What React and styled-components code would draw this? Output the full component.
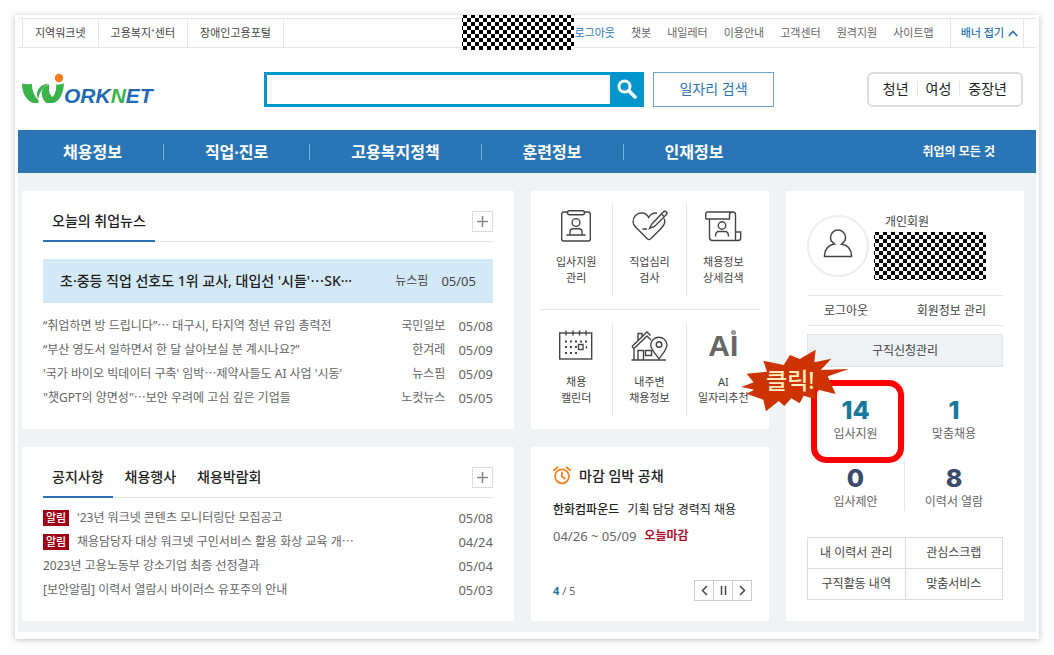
import React from 'react';
import styled, { createGlobalStyle, css } from 'styled-components';

const colors = {
  blue: '#2a75b5',
  cyan: '#0096cc',
  text: '#222',
  gray: '#666',
  line: '#e6e6e6',
  bg: '#eff3f6',
  red: '#f00',
};

const GlobalStyle = createGlobalStyle`
  *, *::before, *::after {
    box-sizing: border-box;
  }

  body {
    margin: 0;
    background: #fefefe;
    color: ${colors.text};
    font-family: 'Noto Sans', 'Noto Sans CJK KR', sans-serif;
    font-size: 12px;
    line-height: 16px;
  }

  a {
    color: inherit;
    text-decoration: none;
  }

  button, input {
    font: inherit;
    color: inherit;
  }

  ul, p, h2 {
    margin: 0;
    padding: 0;
    list-style: none;
  }
`;

const topLinks = ['지역워크넷', '고용복지⁺센터', '장애인고용포털'];
const userLinks = ['로그아웃', '챗봇', '내일레터', '이용안내', '고객센터', '원격지원', '사이트맵'];
const groups = ['청년', '여성', '중장년'];
const menu = ['채용정보', '직업·진로', '고용복지정책', '훈련정보', '인재정보'];

const news = [
  { title: '“취업하면 방 드립니다”⋯ 대구시, 타지역 청년 유입 총력전', source: '국민일보', date: '05/08' },
  { title: '“부산 영도서 일하면서 한 달 살아보실 분 계시나요?”', source: '한겨레', date: '05/09' },
  { title: "'국가 바이오 빅데이터 구축' 임박⋯제약사들도 AI 사업 '시동'", source: '뉴스핌', date: '05/09' },
  { title: '"챗GPT의 양면성"⋯보안 우려에 고심 깊은 기업들', source: '노컷뉴스', date: '05/05' },
];

const notices = [
  { title: "'23년 워크넷 콘텐츠 모니터링단 모집공고", date: '05/08', alert: true },
  { title: '채용담당자 대상 워크넷 구인서비스 활용 화상 교육 개⋯', date: '04/24', alert: true },
  { title: '2023년 고용노동부 강소기업 최종 선정결과', date: '05/04' },
  { title: '[보안알림] 이력서 열람시 바이러스 유포주의 안내', date: '05/03' },
];

const shortcuts = ['내 이력서 관리', '관심스크랩', '구직활동 내역', '맞춤서비스'];

/* icons */

const Logo = () => (
  <svg width='138' height='38' viewBox='0 -2 138 38' role='img' aria-label='WORKNET'>
    <path fill='#39b34a' d='M0 11.5Q5 12.500 10 12C10 18 12 24 16.500 28V31H11C4 28 0 21 0 11.500Z' />
    <path fill='#39b34a' d='M16 27C12.500 19 18 12 27 11.500C20.500 15 18 20 16 27Z' />
    <path fill='#39b34a' d='M20.500 17C22.500 14.500 24.500 13.200 27.500 12.500C26 18 27.500 22.500 30.500 25C33.500 22 34.500 17 34 12.500Q38 13 42 11.500C41.500 21 37.500 30 31 31H24.500C20.500 28 18.500 22 20.500 17Z' />
    <circle cx='37' cy='6' r='4.200' fill='#f57c1f' />
    <text x='42' y='31' fontFamily='Liberation Sans, sans-serif' fontSize='21' fontWeight='700' fontStyle='italic' fill='#2369b3'>
      ORK<tspan fill='#39b34a'>N</tspan>ET
    </text>
  </svg>
);

const Mosaic = () => (
  <svg width='112' height='100%' shapeRendering='crispEdges' aria-hidden='true'>
    <defs>
      <pattern id='mosaic' x='1' y='-1' width='8' height='8' patternUnits='userSpaceOnUse'>
        <rect width='8' height='8' fill='#fff' />
        <rect width='4' height='4' />
        <rect x='4' y='4' width='4' height='4' />
      </pattern>
    </defs>
    <rect width='112' height='100%' fill='url(#mosaic)' />
  </svg>
);

const SearchIcon = () => (
  <svg width='20' height='20' viewBox='0 0 20 20' fill='none' stroke='#fff' aria-hidden='true'>
    <circle cx='7.5' cy='7.5' r='5.5' strokeWidth='3' />
    <path d='M12 12L18 18' strokeWidth='3.6' strokeLinecap='round' />
  </svg>
);

const ChevronUp = () => (
  <svg width='10' height='7' viewBox='0 0 10 7' fill='none' stroke={colors.blue} strokeWidth='1.8' aria-hidden='true'>
    <path d='M0.700 6L5 1.500L9.300 6' />
  </svg>
);

const PlusIcon = () => (
  <svg width='11' height='11' viewBox='0 0 11 11' stroke='#888' strokeWidth='1.5' aria-hidden='true'>
    <path d='M5.5 0V11M0 5.5H11' />
  </svg>
);

const AlarmIcon = () => (
  <svg width='18' height='19' viewBox='0 0 18 19' fill='none' stroke='#f58220' strokeWidth='1.8' strokeLinecap='round' aria-hidden='true'>
    <circle cx='9' cy='10.3' r='7' />
    <path d='M9 6.5V10.5L11.8 12.5M1 4.2L4.4 1.3M17 4.2L13.6 1.3' />
  </svg>
);

const PersonIcon = () => (
  <svg width='30' height='29' viewBox='0 0 30 29' fill='none' stroke='#444' strokeWidth='1.5' aria-hidden='true'>
    <path d='M11.500 15C8.500 13 7.500 11 7.500 8.500A7.500 7.500 0 0 1 22.500 8.500C22.500 11 21.500 13 18.500 15C24.500 16 28.500 20 28.500 27.500H1.500C1.500 20 5.500 16 11.500 15Z' />
  </svg>
);

const lineIcon = { width: 38, height: 34, viewBox: '0 0 38 34', fill: 'none', stroke: '#444', strokeWidth: 1.4, 'aria-hidden': true };

const ResumeIcon = () => (
  <svg {...lineIcon}>
    <rect x='4.700' y='3' width='28.600' height='29' rx='2' />
    <rect x='10.500' y='1.700' width='17' height='4' rx='2' fill='#fff' />
    <circle cx='19' cy='13.500' r='3.900' />
    <path d='M13 26V23Q13 19.700 16 19.700H22Q25 19.700 25 23V26M9.500 26H28.500' />
  </svg>
);

const TestIcon = () => (
  <svg {...lineIcon}>
    <path d='M27 4.200C23.500 3.500 20 5.500 18.700 8.500C16 3.200 9 2.500 5.500 6.500C2 10.500 2.600 15 5.500 18L17.500 30Q19 31.200 20.500 30L31.500 19C34.500 16 35.500 12.500 34 9.500' />
    <path d='M19.500 19.500L21.500 15.500L33 3.200Q35 1.500 36.500 3Q37.700 4.500 36 6L24.500 17.500ZM12.500 20H17M32 5.500L34 7.500' />
  </svg>
);

const DetailIcon = () => (
  <svg {...lineIcon}>
    <path d='M5 10H2.700Q1.700 10 1.700 9V5.500Q1.700 3 4.200 3H28.500Q31.500 3 31.500 6V31.500H8.500Q5.500 31.500 5.500 28.500V10H25.500V6Q25.500 3 28.500 3M31.500 23H36.700V29Q36.700 31.500 34 31.500H31.500' />
    <circle cx='18' cy='16.500' r='3.700' />
    <path d='M11.500 27.500Q11.500 22.500 15 22.500H21Q24.500 22.500 24.500 27.500' />
  </svg>
);

const CalendarIcon = () => (
  <svg {...lineIcon}>
    <rect x='2.700' y='4' width='32' height='26' />
    <path d='M9 1.500V6.500M16 1.500V6.500M22.500 1.500V6.500M29 1.500V6.500' />
    <path d='M8 12.500H31M8 18H20M8 24H21' strokeDasharray='2 3' strokeWidth='2' />
    <rect x='21.500' y='15.500' width='4.500' height='5' />
    <path d='M29.500 17V19.500' />
  </svg>
);

const HouseIcon = () => (
  <svg {...lineIcon}>
    <path d='M1.500 31H36M4 31V18.500M2 17.500L17 3L20.500 6.500M2 17.500L4 19.500L17 7L21 11M8 11.500V4.500H12V7.500' />
    <path d='M8 31V21.500H13.500V31M15.500 21.500H21.500V26.500H15.500Z' />
    <path d='M29 30C26 25 20.700 21 20.700 15.500A8.200 8.200 0 0 1 37 15.500C37 21 32 25 29 30Z' fill='#fff' />
    <circle cx='29' cy='15.500' r='2.800' />
  </svg>
);

const AiIcon = () => (
  <AiMark>
    AI
    <AiDot />
  </AiMark>
);

const quickMenu = [
  { icon: ResumeIcon, lines: ['입사지원', '관리'] },
  { icon: TestIcon, lines: ['직업심리', '검사'] },
  { icon: DetailIcon, lines: ['채용정보', '상세검색'] },
  { icon: CalendarIcon, lines: ['채용', '캘린더'] },
  { icon: HouseIcon, lines: ['내주변', '채용정보'] },
  { icon: AiIcon, lines: ['AI', '일자리추천'] },
];

const ClickBurst = () => (
  <Burst>
    <svg width='109' height='64' viewBox='0 0 327 192' aria-hidden='true'>
      <path
        fill='#cc3300'
        d='M324 60L260 82L284 135L222 120L224 151L188 140L176 163L151 148L130 171L113 156L75 187L67 152L16 134L40 122L1 114L38 100L17 74L78 68L67 35L128 48L147 18L176 30L224 2L220 40L271 29L239 63Z'
      />
    </svg>
    <BurstText>클릭!</BurstText>
  </Burst>
);

const App = () => (
  <>
    <GlobalStyle />
    <Frame lang='ko'>
      <TopBar>
        <SiteLinks>
          {topLinks.map((name) => (
            <SiteLink key={name} href='#'>{name}</SiteLink>
          ))}
        </SiteLinks>
        <UserLinks>
          <NameMask><Mosaic /></NameMask>
          {userLinks.map((name, i) => (
            <UserLink key={name} href='#' $active={i === 0}>{name}</UserLink>
          ))}
        </UserLinks>
        <BannerToggle type='button'>
          배너 접기 <ChevronUp />
        </BannerToggle>
      </TopBar>

      <Header>
        <LogoLink href='#'><Logo /></LogoLink>
        <SearchForm onSubmit={(e) => e.preventDefault()}>
          <SearchInput type='search' aria-label='검색어' />
          <SearchButton type='submit' aria-label='검색'><SearchIcon /></SearchButton>
        </SearchForm>
        <JobSearch type='button'>일자리 검색</JobSearch>
        <Groups>
          {groups.map((name) => (
            <GroupLink key={name} href='#'>{name}</GroupLink>
          ))}
        </Groups>
      </Header>

      <MainNav>
        {menu.map((name) => (
          <MenuLink key={name} href='#'>{name}</MenuLink>
        ))}
        <AllLink href='#'>취업의 모든 것</AllLink>
      </MainNav>

      <Content>
        <ListCard>
          <Tabs>
            <Tab type='button' $active>오늘의 취업뉴스</Tab>
            <MoreButton type='button' aria-label='더보기'><PlusIcon /></MoreButton>
          </Tabs>
          <Headline href='#'>
            <HeadlineTitle>초·중등 직업 선호도 1위 교사, 대입선 '시들'⋯SK···</HeadlineTitle>
            <span>뉴스핌</span>
            <DateText>05/05</DateText>
          </Headline>
          <List>
            {news.map((item) => (
              <Row key={item.title}>
                <RowTitle href='#'>{item.title}</RowTitle>
                <span>{item.source}</span>
                <DateText>{item.date}</DateText>
              </Row>
            ))}
          </List>
        </ListCard>

        <QuickCard>
          {quickMenu.map(({ icon: Icon, lines }) => (
            <QuickCell key={lines.join(' ')}>
              <QuickLink href='#'>
                <QuickIcon><Icon /></QuickIcon>
                <span>{lines[0]}</span>
                <span>{lines[1]}</span>
              </QuickLink>
            </QuickCell>
          ))}
        </QuickCard>

        <ProfileCard>
          <Profile>
            <Avatar><PersonIcon /></Avatar>
            <div>
              <MemberType>개인회원</MemberType>
              <ProfileMask><Mosaic /></ProfileMask>
            </div>
          </Profile>
          <AccountLinks>
            <a href='#'>로그아웃</a>
            <a href='#'>회원정보 관리</a>
          </AccountLinks>
          <ManageButton type='button'>구직신청관리</ManageButton>
          <Stats>
            <Stat href='#'>
              <StatValue $color='#187a9b'>14</StatValue>
              <StatLabel>입사지원</StatLabel>
              <Marker />
              <ClickBurst />
            </Stat>
            <Stat href='#'>
              <StatValue $color='#187a9b'>1</StatValue>
              <StatLabel>맞춤채용</StatLabel>
            </Stat>
            <Stat href='#'>
              <StatValue $color='#3c4a6e'>0</StatValue>
              <StatLabel>입사제안</StatLabel>
            </Stat>
            <Stat href='#'>
              <StatValue $color='#3c4a6e'>8</StatValue>
              <StatLabel>이력서 열람</StatLabel>
            </Stat>
          </Stats>
          <Shortcuts>
            {shortcuts.map((name) => (
              <Shortcut key={name} href='#'>{name}</Shortcut>
            ))}
          </Shortcuts>
        </ProfileCard>

        <ListCard>
          <Tabs>
            <Tab type='button' $active>공지사항</Tab>
            <Tab type='button'>채용행사</Tab>
            <Tab type='button'>채용박람회</Tab>
            <MoreButton type='button' aria-label='더보기'><PlusIcon /></MoreButton>
          </Tabs>
          <List>
            {notices.map((item) => (
              <Row key={item.title}>
                {item.alert && <AlertBadge>알림</AlertBadge>}
                <RowTitle href='#'>{item.title}</RowTitle>
                <DateText>{item.date}</DateText>
              </Row>
            ))}
          </List>
        </ListCard>

        <DeadlineCard>
          <DeadlineTitle><AlarmIcon /> 마감 임박 공채</DeadlineTitle>
          <DeadlineLine href='#'><strong>한화컴파운드</strong> 기획 담당 경력직 채용</DeadlineLine>
          <DeadlineDate>
            <DateText>04/26 ~ 05/09</DateText>
            <Today>오늘마감</Today>
          </DeadlineDate>
          <DeadlineFoot>
            <span><Current>4</Current> / 5</span>
            <Pager>
              <PagerButton type='button' aria-label='이전'>
                <svg width='7' height='11' viewBox='0 0 7 11'><path d='M6 1L1.500 5.500L6 10' /></svg>
              </PagerButton>
              <PagerButton type='button' aria-label='정지'>
                <svg width='7' height='11' viewBox='0 0 7 11'><path d='M1.500 1V10M5.500 1V10' /></svg>
              </PagerButton>
              <PagerButton type='button' aria-label='다음'>
                <svg width='7' height='11' viewBox='0 0 7 11'><path d='M1 1L5.500 5.500L1 10' /></svg>
              </PagerButton>
            </Pager>
          </DeadlineFoot>
        </DeadlineCard>
      </Content>
    </Frame>
  </>
);

const Frame = styled.div`
  margin: 15px;
  padding: 3px 3px 7px;
  background: #fff;
  box-shadow: 0 1px 6px rgba(0, 0, 0, 0.25);
`;

/* top bar */

const TopBar = styled.div`
  display: flex;
  height: 30px;
  padding: 0 12px 0 4px;
  border: solid ${colors.line};
  border-width: 1px 0;
  font-size: 11px;
`;

const SiteLinks = styled.div`
  display: flex;
  margin-right: auto;
  border-right: 1px solid ${colors.line};
`;

const SiteLink = styled.a`
  display: flex;
  align-items: center;
  padding: 0 12px;
  border-left: 1px solid ${colors.line};
  color: #444;
`;

const UserLinks = styled.div`
  display: flex;
  align-items: center;
  gap: 16px;
  padding-right: 16px;
`;

const UserLink = styled.a`
  color: ${({ $active }) => ($active ? colors.blue : colors.gray)};
`;

const NameMask = styled.span`
  display: flex;
  width: 112px;
  height: 35px;
  margin: -4px -15px -3px 0;
`;

const BannerToggle = styled.button`
  display: flex;
  align-items: center;
  gap: 4px;
  padding: 0 5px 0 10px;
  border: solid ${colors.line};
  border-width: 0 1px;
  background: none;
  color: ${colors.blue};
  font-weight: 500;
`;

/* header */

const Header = styled.header`
  display: grid;
  grid-template-columns: 242px minmax(0, 380px) 130px 1fr;
  align-items: center;
  height: 82px;
  padding: 0 13px 0 4px;
`;

const LogoLink = styled.a`
  display: flex;
`;

const SearchForm = styled.form`
  display: flex;
  height: 35px;
  border: 3px solid ${colors.cyan};
  border-right: 0;
`;

const SearchInput = styled.input`
  flex: 1;
  min-width: 0;
  padding: 0 8px;
  border: 0;
  outline: 0;
`;

const SearchButton = styled.button`
  display: flex;
  align-items: center;
  justify-content: center;
  width: 34px;
  padding: 0;
  border: 0;
  background: ${colors.cyan};
`;

const JobSearch = styled.button`
  height: 35px;
  margin-left: 9px;
  padding: 0;
  border: 1px solid #6ba5d6;
  background: #fff;
  color: ${colors.blue};
  font-size: 14px;
`;

const Groups = styled.div`
  display: flex;
  justify-self: end;
  align-items: center;
  height: 35px;
  padding: 0 6px;
  border: 2px solid #ddd;
  border-radius: 6px;
  font-size: 14px;
`;

const GroupLink = styled.a`
  padding: 0 8px;

  & + & {
    border-left: 1px solid ${colors.line};
  }
`;

/* main menu */

const MainNav = styled.nav`
  display: flex;
  align-items: center;
  height: 43px;
  padding: 0 41px 0 4px;
  background: ${colors.blue};
  color: #fff;
`;

const MenuLink = styled.a`
  padding: 0 41px;
  font-size: 16px;
  font-weight: 700;

  & + & {
    border-left: 1px solid #7eadd6;
  }
`;

const AllLink = styled.a`
  margin-left: auto;
  font-weight: 700;
`;

/* cards */

const Content = styled.main`
  display: grid;
  grid-template-columns: minmax(0, 1fr) 238px 238px;
  gap: 18px 17px;
  padding: 18px 12px 11px 4px;
  background: ${colors.bg};
`;

const Card = styled.section`
  background: #fff;
`;

const ListCard = styled(Card)`
  padding: 0 21px 19px;
  color: ${colors.gray};
`;

const Tabs = styled.div`
  display: flex;
  align-items: center;
  height: 51px;
  box-shadow: inset 0 -1px ${colors.line};
`;

const Tab = styled.button`
  height: 51px;
  padding: 10px 9px 0;
  border: solid transparent;
  border-width: 0 0 2px;
  background: none;
  color: ${colors.text};
  font-size: 14px;
  font-weight: 500;

  & + & {
    margin-left: 3px;
  }

  ${({ $active }) => $active && css`
    border-color: ${colors.blue};
  `}
`;

const MoreButton = styled.button`
  display: flex;
  align-items: center;
  justify-content: center;
  width: 21px;
  height: 21px;
  margin: 10px 0 0 auto;
  padding: 0;
  border: 1px solid #ddd;
  background: #fff;
`;

const Headline = styled.a`
  display: flex;
  align-items: center;
  gap: 13px;
  height: 44px;
  margin-top: 17px;
  padding: 0 17px;
  background: #d3e9f8;
  color: #444;
`;

const HeadlineTitle = styled.strong`
  flex: 1;
  color: ${colors.text};
  font-size: 14px;
  font-weight: 500;
  white-space: nowrap;
`;

const List = styled.ul`
  ${Tabs} + & {
    padding-top: 8px;
  }

  ${Headline} + & {
    padding-top: 11px;
  }
`;

const Row = styled.li`
  display: flex;
  align-items: center;
  gap: 13px;
  height: 24px;
`;

const RowTitle = styled.a`
  flex: 1;
  min-width: 0;
  overflow: hidden;
  white-space: nowrap;
`;

const DateText = styled.span`
  font-size: 13px;
`;

const AlertBadge = styled.span`
  width: 26px;
  margin-right: -5px;
  background: #9f0018;
  color: #fff;
  font-size: 11px;
  font-weight: 500;
  text-align: center;
`;

/* quick menu */

const QuickCard = styled(Card)`
  display: grid;
  grid-template-columns: repeat(3, 1fr);
  align-content: start;
  row-gap: 1px;
  padding: 0 9px;
`;

const QuickCell = styled.div`
  padding: 12px 0;

  &:nth-child(-n + 3) {
    border-bottom: 1px solid ${colors.line};
  }

  &:not(:nth-child(3n)) > a {
    border-right: 1px solid ${colors.line};
  }
`;

const QuickLink = styled.a`
  display: flex;
  flex-direction: column;
  align-items: center;
  height: 94px;
  color: #444;
  font-size: 11px;
  white-space: nowrap;
`;

const QuickIcon = styled.span`
  display: flex;
  align-items: center;
  height: 45px;
  margin-bottom: 6px;
`;

const AiMark = styled.span`
  position: relative;
  color: #666;
  font-family: 'Liberation Sans', sans-serif;
  font-size: 30px;
  font-weight: 700;
`;

const AiDot = styled.span`
  position: absolute;
  top: -8px;
  right: 2px;
  width: 5px;
  height: 5px;
  border-radius: 50%;
  background: #999;
`;

/* profile */

const ProfileCard = styled(Card)`
  grid-row: span 2;
  padding: 24px 21px 21px;
  color: #444;
`;

const Profile = styled.div`
  display: flex;
  align-items: flex-start;
  gap: 5px;
`;

const Avatar = styled.div`
  display: flex;
  align-items: center;
  justify-content: center;
  width: 62px;
  height: 62px;
  padding-bottom: 6px;
  border: 2px solid #eee;
  border-radius: 50%;
`;

const MemberType = styled.p`
  padding-left: 11px;
  line-height: 14px;
`;

const ProfileMask = styled.div`
  display: flex;
  width: 112px;
  height: 48px;
  margin-top: 3px;
`;

const AccountLinks = styled.div`
  display: flex;
  justify-content: space-between;
  align-items: center;
  height: 31px;
  margin-top: 15px;
  padding: 0 17px;
  border: solid ${colors.line};
  border-width: 1px 0;
`;

const ManageButton = styled.button`
  display: block;
  width: 100%;
  height: 33px;
  margin-top: 8px;
  border: 1px solid #e2e6ea;
  background: #eef2f5;
`;

const Stats = styled.div`
  display: grid;
  grid-template-columns: 1fr 1fr;
  row-gap: 16px;
  margin-top: 24px;
`;

const Stat = styled.a`
  position: relative;
  display: flex;
  flex-direction: column;
  align-items: center;
  height: 52px;
  padding-top: 4px;

  &:nth-child(odd) {
    border-right: 1px solid ${colors.line};
  }
`;

const StatValue = styled.strong`
  color: ${({ $color }) => $color};
  font-family: Inter, sans-serif;
  font-size: 25px;
  font-weight: 800;
  line-height: 31px;
`;

const StatLabel = styled.span`
  color: ${colors.gray};
`;

const Marker = styled.span`
  position: absolute;
  inset: -11px 0 -20px 4px;
  border: 6px solid ${colors.red};
  border-radius: 15px;
`;

const Burst = styled.span`
  position: absolute;
  top: -42px;
  left: -66px;
  z-index: 1;
`;

const BurstText = styled.span`
  position: absolute;
  top: 19px;
  left: 25px;
  color: #fdeec0;
  font-size: 23px;
  font-weight: 500;
  line-height: 24px;
  white-space: nowrap;
`;

const Shortcuts = styled.div`
  display: grid;
  grid-template-columns: 1fr 1fr;
  gap: 1px;
  margin-top: 26px;
  padding: 1px;
  background: #ddd;
`;

const Shortcut = styled.a`
  height: 30px;
  background: #fff;
  line-height: 30px;
  text-align: center;
`;

/* deadline */

const DeadlineCard = styled(Card)`
  display: flex;
  flex-direction: column;
  padding: 19px 17px 20px 22px;
`;

const DeadlineTitle = styled.h2`
  display: flex;
  align-items: center;
  gap: 8px;
  font-size: 14px;
  font-weight: 500;
  line-height: 19px;
`;

const DeadlineLine = styled.a`
  margin-top: 17px;

  strong {
    margin-right: 5px;
    font-weight: 500;
  }
`;

const DeadlineDate = styled.p`
  display: flex;
  gap: 8px;
  margin-top: 10px;
  color: ${colors.gray};
`;

const Today = styled.strong`
  color: #b3102d;
`;

const DeadlineFoot = styled.div`
  display: flex;
  justify-content: space-between;
  align-items: center;
  margin-top: auto;
  color: ${colors.gray};
  font-size: 11px;
`;

const Current = styled.strong`
  color: #187a9b;
`;

const Pager = styled.div`
  display: flex;
`;

const PagerButton = styled.button`
  display: flex;
  align-items: center;
  justify-content: center;
  width: 20px;
  height: 21px;
  padding: 0;
  border: 1px solid #ccc;
  background: #fff;

  & + & {
    margin-left: -1px;
  }

  svg {
    fill: none;
    stroke: #444;
    stroke-width: 1.5;
  }
`;

export default App;
